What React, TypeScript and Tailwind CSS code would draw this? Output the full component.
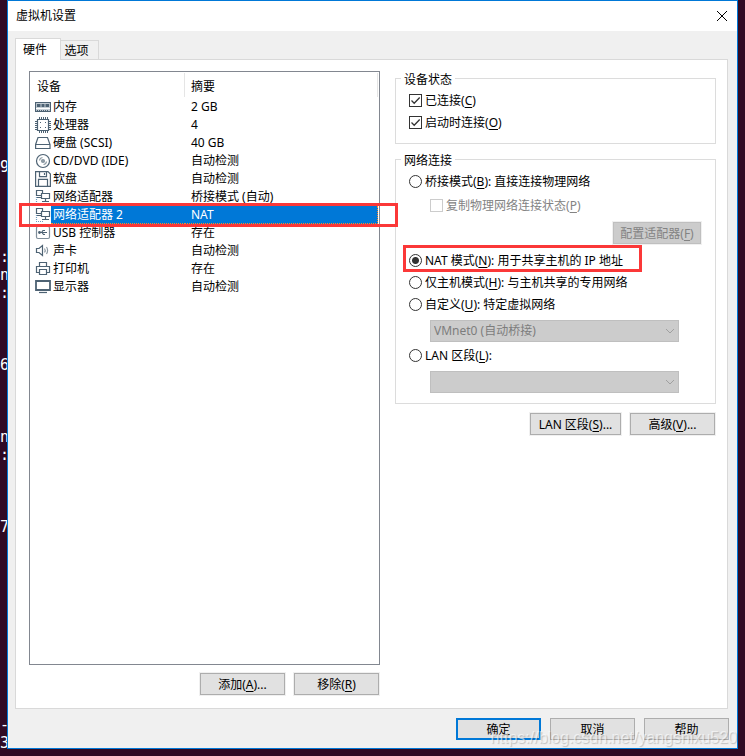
import type { ReactNode } from 'react';

const stroke = '#4d6273';

function Icon({ children }: { children: ReactNode }) {
  return (
    <svg className="w-4 h-4 shrink-0" viewBox="0 0 16 16" fill="none" stroke={stroke} strokeWidth={1.2} aria-hidden="true">
      {children}
    </svg>
  );
}

const NetworkIcon = () => (
  <Icon>
    <path d="M1.5 8v6M1 14.5h8" stroke="#6f9cc0" strokeDasharray="1 1" />
    <path d="M1.5 1.5h6v5h-6zM2 8.5h4" />
    <path d="M6.5 4.5h8v5h-8z" fill="#fff" />
    <path d="M10.5 9.5v3M7 12.5h7" />
  </Icon>
);

const devices = [
  {
    name: '内存',
    summary: '2 GB',
    icon: (
      <Icon>
        <path d="M.5 3.5h15v9H.5z" fill="#c3ccd3" />
        <path d="M2 5h3.5v3H2zM6.500 5h3v3h-3zM10.500 5H14v3h-3.500z" fill={stroke} stroke="none" />
        <path d="M1 9.5h14" stroke="#fff" />
        <path d="M2 11.5h12" strokeDasharray="1 1" />
      </Icon>
    ),
  },
  {
    name: '处理器',
    summary: '4',
    icon: (
      <Icon>
        <path d="M4 1h9M4 15h9M1 4v9M15 4v9" strokeWidth={2} strokeDasharray="1 1" />
        <path d="M2.5 2.5h11v11h-11z" fill="#fff" />
        <path d="M5 5.5h1M10 5.5h1M10 10.5h1M5 10.5h1" />
      </Icon>
    ),
  },
  {
    name: '硬盘 (SCSI)',
    summary: '40 GB',
    icon: (
      <Icon>
        <path d="M.6 9.5 3 2.5h9.5l2.5 7v4H.6zM.5 9.5H15" />
      </Icon>
    ),
  },
  {
    name: 'CD/DVD (IDE)',
    summary: '自动检测',
    icon: (
      <Icon>
        <circle cx="8" cy="8" r="6.5" />
        <circle cx="8" cy="8" r="1.5" fill="#8c99a3" stroke="#8c99a3" />
        <path d="M4.5 7.5a3.5 3.5 0 0 1 3-3M11.5 8.5a3.5 3.5 0 0 1-3 3" stroke="#8c99a3" />
      </Icon>
    ),
  },
  {
    name: '软盘',
    summary: '自动检测',
    icon: (
      <Icon>
        <path d="M.6.6H13L15.4 3v12.4H.6z" />
        <path d="M4.5.6v5h7v-5M9.5 2v2M3.5 15.4v-7h9v7" />
      </Icon>
    ),
  },
  { name: '网络适配器', summary: '桥接模式 (自动)', icon: <NetworkIcon /> },
  { name: '网络适配器 2', summary: 'NAT', icon: <NetworkIcon />, selected: true },
  {
    name: 'USB 控制器',
    summary: '存在',
    icon: (
      <Icon>
        <rect x="1.5" y="1.5" width="13" height="12" rx="1.5" stroke="#7f8e9a" />
        <path d="M4 7.5h8M6.500 7.5l1.500-2h2M7 7.5l1.500 2H10" />
        <circle cx="4.5" cy="7.5" r=".8" fill={stroke} />
      </Icon>
    ),
  },
  {
    name: '声卡',
    summary: '自动检测',
    icon: (
      <Icon>
        <path d="M1.5 5.5H4l3.5-3v10L4 9.5H1.5z" />
        <path d="M9.5 5.5q1.5 2 0 4M11.5 4q2.2 3.500 0 7" stroke="#8c99a3" />
      </Icon>
    ),
  },
  {
    name: '打印机',
    summary: '存在',
    icon: (
      <Icon>
        <path d="M4.5 5.5v-4h7v4M4 11.5H1.5v-6h13v6H12M4.5 8.5h7v5h-7z" />
      </Icon>
    ),
  },
  {
    name: '显示器',
    summary: '自动检测',
    icon: (
      <Icon>
        <path d="M1 2h14v9H1z" strokeWidth={1.8} />
        <path d="M4 13.5h8" />
      </Icon>
    ),
  },
];

const terminal = [
  '', '', '', '', '', '', '', '', '9', '', '', '', '', ':', 'n', ':', '', '', '', '6',
  '', '', '', 'n', ':', '', '', '', '7', '', '', '', '', '', '', '', '', '', '', '-', '3',
];

const button = 'h-[22px] pt-0.5 border border-[#adadad] bg-[#e1e1e1] text-center leading-[18px] shadow-[0_0_0_1px_#f0f0f0]';

function Highlight({ className }: { className: string }) {
  return <span className={`absolute z-10 border-3 border-[#fb3838] pointer-events-none ${className}`} />;
}

function Check({ label, hotkey, disabled = false }: { label: string; hotkey: string; disabled?: boolean }) {
  return (
    <label className={`flex items-center gap-[3px] h-[22px] ${disabled ? 'text-[#838383]' : ''}`}>
      <span className="relative w-[13px] h-[13px] mb-px shrink-0">
        <input
          type="checkbox"
          defaultChecked={!disabled}
          disabled={disabled}
          className="peer block appearance-none w-full h-full border border-[#333] bg-white disabled:border-[#ccc]"
        />
        <svg className="absolute inset-0 hidden peer-checked:block pointer-events-none" viewBox="0 0 13 13" fill="none" stroke="#333" strokeWidth={1.3}>
          <path d="M2.500 6.500 5.200 9.200 10.700 3.500" />
        </svg>
      </span>
      <span>{label}(<u>{hotkey}</u>)</span>
    </label>
  );
}

function Radio({ children, checked = false }: { children: ReactNode; checked?: boolean }) {
  return (
    <label className="relative flex items-center gap-[3px] h-[22px]">
      <input
        type="radio"
        name="network"
        defaultChecked={checked}
        className="appearance-none w-[13px] h-[13px] mb-px shrink-0 rounded-full border border-[#333] bg-white checked:bg-[radial-gradient(circle,#333_3px,#fff_4px)]"
      />
      <span>{children}</span>
      {checked && <Highlight className="-left-1.5 -top-[5px] bottom-0 w-[239px]" />}
    </label>
  );
}

function DisabledSelect({ label, value }: { label: string; value: string }) {
  return (
    <div className="relative ml-[21px] mr-[23px] h-[22px]">
      <select disabled aria-label={label} className="block appearance-none w-full h-full pl-[3px] border border-[#bfbfbf] bg-[#ccc] text-[#7d7d7d] opacity-100">
        <option>{value}</option>
      </select>
      <svg className="absolute right-1 top-[7px] w-[10px] h-2 pointer-events-none" viewBox="0 0 10 8" fill="none" stroke="#a0a0a0">
        <path d="M1 2l4 4 4-4" />
      </svg>
    </div>
  );
}

export default function App() {
  return (
    <div className="flex min-h-screen pr-[7px] bg-[#300a24] text-xs text-black font-['Noto_Sans','Noto_Sans_CJK_SC',sans-serif] [&_u]:underline-offset-2 [&_u]:[text-decoration-skip-ink:none]">
      {/* Terminal behind the dialog */}
      <pre className="w-[7px] shrink-0 pt-[14px] -mb-4 overflow-hidden text-[15px] leading-[18px] text-white font-['DejaVu_Sans_Mono',monospace] -indent-px">
        {terminal.join('\n')}
      </pre>

      <div className="relative flex flex-col flex-1 mb-[7px] border border-[#0078d7] bg-[#f0f0f0]">
        {/* Title bar */}
        <header className="flex items-center justify-between h-[30px] pl-2 pr-[9px] pb-px bg-white">
          <h1>虚拟机设置</h1>
          <button type="button" aria-label="关闭" className="w-3 h-3">
            <svg viewBox="0 0 12 12" fill="none" stroke="#000">
              <path d="M1 1l10 10M11 1L1 11" />
            </svg>
          </button>
        </header>

        <main className="flex flex-col flex-1 pt-[7px] pl-[7px] pr-2 pb-2">
          {/* Tabs */}
          <div role="tablist" className="flex items-end h-[22px] -mb-px">
            <button type="button" role="tab" aria-selected="true" className="relative w-[46px] h-[22px] pr-1.5 pt-px border border-b-0 border-[#d9d9d9] bg-white">硬件</button>
            <button type="button" role="tab" aria-selected="false" className="w-[39px] h-5 -ml-px pr-1.5 pt-0.5 border border-[#d9d9d9] bg-[#f0f0f0]">选项</button>
          </div>

          <div className="flex flex-1 gap-[15px] mr-px pt-[11px] pl-[13px] pr-[11px] pb-[13px] border border-[#d9d9d9] bg-white">
            {/* Device list */}
            <section className="flex flex-col flex-[351]">
              <div className="flex-1 border border-[#828790]">
                <table className="w-full table-fixed border-collapse text-left leading-[18px]">
                  <thead>
                    <tr className="h-[26px]">
                      <th className="w-[155px] p-0 font-normal"><div className="h-6 pl-[7px] pt-[5px] border-r border-[#e5e5e5]">设备</div></th>
                      <th className="p-0 font-normal"><div className="h-6 mr-px pl-1.5 pt-[5px] border-r border-[#e5e5e5]">摘要</div></th>
                    </tr>
                  </thead>
                  <tbody>
                    {devices.map((device) => (
                      <tr key={device.name} className="relative h-[18px]">
                        <td className="p-0">
                          <div className="flex items-center h-[18px] pl-[5px]">
                            {device.icon}
                            <span className={`flex-1 h-[18px] pl-0.5 ${device.selected ? 'border-b border-dotted border-[#ff8728] bg-[#0078d7] text-white' : ''}`}>{device.name}</span>
                          </div>
                        </td>
                        <td className="p-0">
                          <div className={`h-[18px] mr-px pl-1.5 ${device.selected ? 'border-b border-r border-dotted border-[#ff8728] bg-[#0078d7] text-white' : ''}`}>{device.summary}</div>
                          {device.selected && <Highlight className="-left-[11px] -right-[19px] -top-[3px] -bottom-[3px]" />}
                        </td>
                      </tr>
                    ))}
                  </tbody>
                </table>
              </div>
              <div className="flex justify-end gap-[9px] mt-2 pr-px">
                <button type="button" className={`${button} w-[85px]`}>添加(<u>A</u>)...</button>
                <button type="button" className={`${button} w-[85px]`}>移除(<u>R</u>)</button>
              </div>
            </section>

            {/* Adapter options */}
            <section className="flex-[321]">
              <fieldset className="relative h-[66px] mt-[7px] pt-[11px] pl-[13px] border border-[#dcdcdc]">
                <legend className="absolute -top-2 left-[5px] px-[3px] leading-[18px] bg-white">设备状态</legend>
                <Check label="已连接" hotkey="C" />
                <Check label="启动时连接" hotkey="O" />
              </fieldset>

              <fieldset className="relative mt-[15px] pt-[11px] pl-[13px] pr-[13px] pb-[10px] border border-[#dcdcdc]">
                <legend className="absolute -top-2 left-[5px] px-[3px] leading-[18px] bg-white">网络连接</legend>
                <Radio>桥接模式(<u>B</u>): 直接连接物理网络</Radio>
                <div className="mt-0.5 ml-[21px]">
                  <Check label="复制物理网络连接状态" hotkey="P" disabled />
                </div>
                <div className="flex justify-end mt-[5px] mb-1.5 pr-px">
                  <button type="button" disabled className="w-[88px] h-[22px] pt-0.5 border border-[#bfbfbf] bg-[#ccc] text-[#838383] shadow-[0_0_0_1px_#f0f0f0]">配置适配器(<u>F</u>)</button>
                </div>
                <Radio checked>NAT 模式(<u>N</u>): 用于共享主机的 IP 地址</Radio>
                <Radio>仅主机模式(<u>H</u>): 与主机共享的专用网络</Radio>
                <Radio>自定义(<u>U</u>): 特定虚拟网络</Radio>
                <div className="mt-1 mb-[3px]">
                  <DisabledSelect label="特定虚拟网络" value="VMnet0 (自动桥接)" />
                </div>
                <Radio>LAN 区段(<u>L</u>):</Radio>
                <div className="mt-1">
                  <DisabledSelect label="LAN 区段" value="" />
                </div>
              </fieldset>

              <div className="flex justify-end gap-[9px] mt-[9px] pr-px">
                <button type="button" className={`${button} w-[91px]`}>LAN 区段(<u>S</u>)...</button>
                <button type="button" className={`${button} w-[85px]`}>高级(<u>V</u>)...</button>
              </div>
            </section>
          </div>

          {/* Dialog buttons */}
          <footer className="flex justify-end gap-[9px] mt-[9px]">
            <button type="button" className="w-[85px] h-[22px] pt-0.5 border-2 border-[#0078d7] bg-[#e1e1e1] leading-4">确定</button>
            <button type="button" className={`${button} w-[85px]`}>取消</button>
            <button type="button" className={`${button} w-[85px]`}>帮助</button>
          </footer>
        </main>

        <p className="absolute right-0 bottom-0 text-base leading-5 text-white/60 font-['Liberation_Sans',sans-serif] [text-shadow:1px_1px_1px_#0003] pointer-events-none">
          https://blog.csdn.net/yangshixu520
        </p>
      </div>
    </div>
  );
}
